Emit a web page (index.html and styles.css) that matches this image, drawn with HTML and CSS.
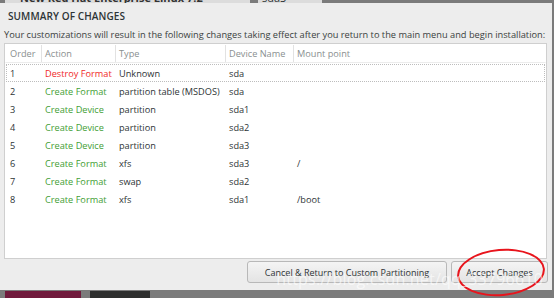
FILE: index.html
```html
<!DOCTYPE html>
<html lang="en">
<head>
  <meta charset="UTF-8" />
  <title>Summary of Changes</title>
  <link rel="stylesheet" href="styles.css">
</head>
<body>
  <div class="backdrop-top">
    <div class="spoke">New Red Hat Enterprise Linux 7.2</div>
    <div class="spoke-side">sda3</div>
  </div>

  <div class="dialog">
    <div class="title">SUMMARY OF CHANGES</div>
    <div class="desc">Your customizations will result in the following changes taking effect after you return to the main menu and begin installation:</div>

    <div class="table">
      <div class="row head">
        <div class="c order">Order</div>
        <div class="c action">Action</div>
        <div class="c type">Type</div>
        <div class="c dev">Device Name</div>
        <div class="c mount">Mount point</div>
      </div>
      <div class="row focus">
        <div class="c order">1</div>
        <div class="c action destroy">Destroy Format</div>
        <div class="c type">Unknown</div>
        <div class="c dev">sda</div>
        <div class="c mount"></div>
      </div>
      <div class="row">
        <div class="c order">2</div>
        <div class="c action create">Create Format</div>
        <div class="c type">partition table (MSDOS)</div>
        <div class="c dev">sda</div>
        <div class="c mount"></div>
      </div>
      <div class="row">
        <div class="c order">3</div>
        <div class="c action create">Create Device</div>
        <div class="c type">partition</div>
        <div class="c dev">sda1</div>
        <div class="c mount"></div>
      </div>
      <div class="row">
        <div class="c order">4</div>
        <div class="c action create">Create Device</div>
        <div class="c type">partition</div>
        <div class="c dev">sda2</div>
        <div class="c mount"></div>
      </div>
      <div class="row">
        <div class="c order">5</div>
        <div class="c action create">Create Device</div>
        <div class="c type">partition</div>
        <div class="c dev">sda3</div>
        <div class="c mount"></div>
      </div>
      <div class="row">
        <div class="c order">6</div>
        <div class="c action create">Create Format</div>
        <div class="c type">xfs</div>
        <div class="c dev">sda3</div>
        <div class="c mount">/</div>
      </div>
      <div class="row">
        <div class="c order">7</div>
        <div class="c action create">Create Format</div>
        <div class="c type">swap</div>
        <div class="c dev">sda2</div>
        <div class="c mount"></div>
      </div>
      <div class="row">
        <div class="c order">8</div>
        <div class="c action create">Create Format</div>
        <div class="c type">xfs</div>
        <div class="c dev">sda1</div>
        <div class="c mount">/boot</div>
      </div>
    </div>

    <div class="buttons">
      <button class="btn cancel">Cancel &amp; Return to Custom Partitioning</button>
      <button class="btn accept">Accept Changes</button>
      <div class="circle"></div>
      <div class="watermark">https://blog.csdn.net/qq_33796610</div>
    </div>
  </div>

  <div class="backdrop-bottom">
    <div class="block maroon"></div>
    <div class="block dark"></div>
  </div>
</body>
</html>
```

FILE: styles.css
```css
body {
  margin: 0;
  width: 554px;
  height: 298px;
  overflow: hidden;
  background: #7b7b7b;
  font-family: 'Open Sans', sans-serif;
  font-size: 9.2px;
  color: #2e3436;
}

.backdrop-top {
  height: 3px;
  display: flex;
  overflow: hidden;
}

.spoke {
  width: 245px;
  margin-left: 5px;
  background: #dcdcdc;
  font-size: 11px;
  font-weight: bold;
  line-height: 12px;
  margin-top: -8px;
  padding-left: 15px;
  box-sizing: border-box;
  color: #333;
}

.spoke-side {
  margin-left: 8px;
  width: 60px;
  background: #dcdcdc;
  font-size: 11px;
  line-height: 12px;
  margin-top: -8px;
  padding-left: 4px;
}

.dialog {
  width: 552px;
  height: 287px;
  background: #ededed;
  box-sizing: border-box;
  padding: 0 5px 0 4px;
  display: flex;
  flex-direction: column;
}

.title {
  margin-top: 7px;
  padding-left: 4px;
  font-weight: 600;
  font-size: 10px;
  letter-spacing: 0.1px;
  line-height: 12px;
  color: #2e3436;
}

.desc {
  margin-top: 7px;
  line-height: 12px;
  color: #3a3f40;
  white-space: nowrap;
  font-size: 9.25px;
}

.table {
  margin-top: 2px;
  height: 216px;
  background: #fff;
  border: 1px solid #cfcfcf;
  box-sizing: border-box;
}

.row {
  display: flex;
  height: 18px;
  box-sizing: border-box;
  align-items: center;
  border: 1px solid transparent;
  margin: 0 1px;
}

.row.head {
  height: 19px;
  color: #8a8f8f;
  border-bottom: 1px solid #ececec;
  margin: 0;
  padding: 0 1px;
}

.row.head .c {
  border-right: 1px solid #e2e2e2;
  height: 100%;
  display: flex;
  align-items: center;
}

.row.head .mount {
  border-right: none;
}

.row.focus {
  border: 1px dotted #bdbdbd;
  margin-top: 1px;
}

.c {
  box-sizing: border-box;
  padding-left: 3px;
  white-space: nowrap;
}

.order { width: 35px; }
.action { width: 74px; }
.type { width: 110px; }
.dev { width: 68px; }
.mount { flex: 1; }

.destroy { color: #ef2929; }
.create { color: #3f9e35; }

.buttons {
  position: relative;
  display: flex;
  justify-content: flex-end;
  gap: 4px;
  margin-top: 2px;
}

.btn {
  font-family: 'Open Sans', sans-serif;
  font-size: 9px;
  color: #2e3436;
  height: 22px;
  background: linear-gradient(#f4f4f4, #e4e4e4);
  border: 1px solid #b8b8b8;
  border-radius: 3px;
  padding: 0;
}

.cancel { width: 200px; }
.accept { width: 97px; margin-right: -1px; }

.circle {
  position: absolute;
  right: 2px;
  top: -12px;
  width: 88px;
  height: 47px;
  border: 2px solid #e8141c;
  border-radius: 50%;
  box-sizing: border-box;
  transform: rotate(-5deg);
}

.watermark {
  position: absolute;
  right: 4px;
  top: 7px;
  font-size: 16px;
  color: rgba(255, 255, 255, 0.6);
  letter-spacing: 0.2px;
  pointer-events: none;
}

.backdrop-bottom {
  height: 11px;
  display: flex;
  padding-top: 1px;
}

.block {
  height: 10px;
}

.maroon {
  width: 76px;
  margin-left: 5px;
  background: #701a3c;
}

.dark {
  width: 60px;
  margin-left: 9px;
  background: #2e2f2e;
}
```
